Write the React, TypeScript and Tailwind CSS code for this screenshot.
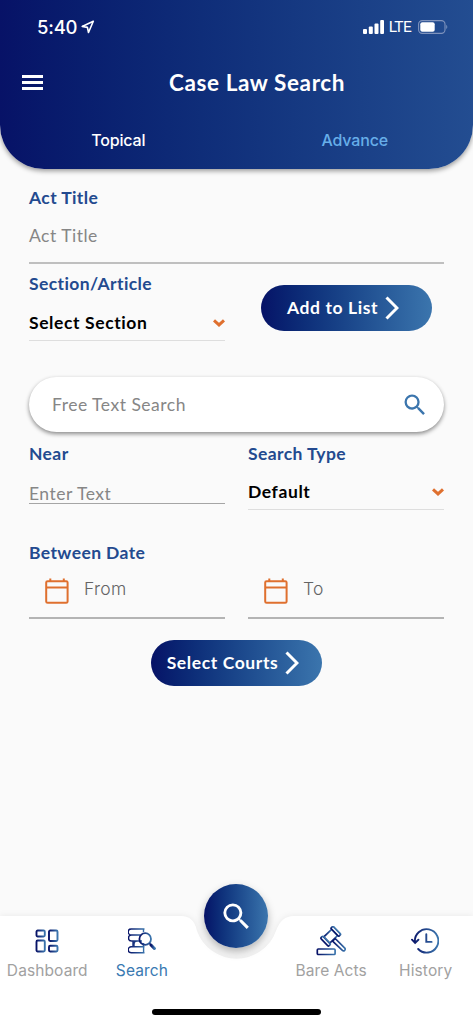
import type { ReactNode } from "react"

const labelClass = "font-[Lato,sans-serif] text-[17.5px] leading-5 font-bold tracking-[0.4px] text-[#234a8f]"
const placeholderClass = "font-[Lato,sans-serif] text-[17.5px] leading-5 tracking-[0.5px] text-[#868686]"

const SearchGlyph = ({ className }: { className: string }) => (
  <svg viewBox="0 0 24 24" fill="currentColor" className={className} aria-hidden>
    <path d="M15.5 14h-.79l-.28-.27A6.471 6.471 0 0 0 16 9.5 6.5 6.5 0 1 0 9.5 16c1.61 0 3.09-.59 4.23-1.57l.27.28v.79l5 4.99L20.49 19l-4.99-5zm-6 0C7.01 14 5 11.99 5 9.5S7.01 5 9.5 5 14 7.01 14 9.5 11.99 14 9.5 14z" />
  </svg>
)

const CalendarIcon = () => (
  <svg viewBox="0 0 24 26" fill="none" stroke="#df702f" strokeWidth="2" className="h-[26px] w-6 shrink-0" aria-hidden>
    <rect x="1.2" y="3.2" width="21.4" height="21.6" rx="1.4" />
    <path d="M1 9.5h22M5.3 .5v3M18.8 .5v3" />
  </svg>
)

const StatusBar = () => (
  <div className="flex h-[53px] items-center pl-[37px] pr-[25px] text-white">
    <span className="font-[Inter,sans-serif] text-[18.5px] leading-5 font-medium tracking-[-0.2px]">5:40</span>
    <svg viewBox="0 0 14 14" fill="none" stroke="currentColor" strokeWidth="1.6" strokeLinejoin="round" className="ml-[4px] size-[14px]" aria-hidden>
      <path d="M12.3 1.3L1.2 6.4l5.2 1 1.1 5.1z" />
    </svg>
    <svg viewBox="0 0 21 14" fill="currentColor" className="ml-auto h-[14px] w-[21px]" aria-hidden>
      <rect x="0" y="9" width="4" height="5" rx="1" />
      <rect x="5.8" y="6.5" width="4" height="7.5" rx="1" />
      <rect x="11.5" y="3.5" width="4" height="10.5" rx="1" />
      <rect x="17.2" y="0" width="3.8" height="14" rx="1" />
    </svg>
    <span className="ml-[5px] font-[Roboto,sans-serif] text-[15.5px] leading-5 font-normal tracking-[-0.7px] whitespace-nowrap">LTE</span>
    <svg viewBox="0 0 30 14" fill="none" className="ml-[7px] h-[14px] w-[30px]" aria-hidden>
      <rect x=".6" y=".6" width="26.4" height="12.8" rx="3.6" stroke="#7f93bd" strokeWidth="1.1" />
      <rect x="2.3" y="2.2" width="14.4" height="9.6" rx="2" fill="white" />
      <path d="M28.4 4.8q1.7 2.2 0 4.4z" fill="#8fa3c8" />
    </svg>
  </div>
)

const Header = () => (
  <header className="h-[169px] shrink-0 rounded-b-[44px] bg-linear-to-r from-[#071267] to-[#234d91] shadow-[0_2px_5px_rgba(0,0,0,0.4)]">
    <StatusBar />
    <div className="grid h-[59px] grid-cols-[32px_1fr_32px] items-center px-[22px]">
      <button aria-label="Menu" className="flex w-[21px] flex-col gap-[3.5px]">
        <span className="h-[2.5px] bg-white" />
        <span className="h-[2.5px] bg-white" />
        <span className="h-[2.5px] bg-white" />
      </button>
      <h1 className="whitespace-nowrap pl-[41px] text-center font-[Lato,sans-serif] text-[22.5px] leading-7 font-bold tracking-[0.6px] text-white">
        Case Law Search
      </h1>
    </div>
    <div className="grid grid-cols-2 pt-[18px] text-center font-[Inter,sans-serif] text-[16px] leading-5 font-medium tracking-[-0.15px]">
      <span className="text-white">Topical</span>
      <span className="text-[#67aee9]">Advance</span>
    </div>
  </header>
)

const SelectField = ({ value }: { value: string }) => (
  <div className="flex h-[36px] items-center justify-between border-b border-[#dedede] pt-px font-[Lato,sans-serif] text-[17.5px] font-bold tracking-[0.6px] text-black">
    {value}
    <svg viewBox="0 0 12 8" fill="none" stroke="#df702f" strokeWidth="3" className="-mt-px h-2 w-3" aria-hidden>
      <path d="M1 1.3l5 4.6 5-4.6" />
    </svg>
  </div>
)

const PillButton = ({ children }: { children: ReactNode }) => (
  <button className="flex h-[46px] w-[171px] items-center justify-center gap-[7px] rounded-full bg-linear-to-r from-[#071267] to-[#3b75ad] pr-[7px] font-[Lato,sans-serif] text-[17.5px] leading-5 font-bold tracking-[0.6px] whitespace-nowrap text-white">
    {children}
    <svg viewBox="0 0 14 24" fill="none" stroke="currentColor" strokeWidth="3" className="h-6 w-[14px]" aria-hidden>
      <path d="M1.5 1.5L12 12 1.5 22.5" />
    </svg>
  </button>
)

const DateField = ({ label }: { label: string }) => (
  <div className="flex h-[55px] items-center border-b-2 border-[#b4b4b4] pl-[15.5px]">
    <CalendarIcon />
    <span className="-mt-[4px] ml-[15.5px] font-[Inter,sans-serif] text-[17.5px] leading-5 font-light tracking-[0.3px] text-[#646464]">{label}</span>
  </div>
)

const DashboardIcon = () => (
  <svg viewBox="0 0 24 24" fill="none" stroke="url(#navInk)" strokeWidth="1.9" className="h-[24px] w-[24px]" aria-hidden>
    <rect x="1.5" y="1.5" width="8.3" height="6" rx="1.2" />
    <rect x="14" y="1.5" width="8.5" height="10.5" rx="1.2" />
    <rect x="1.5" y="11.5" width="8.3" height="11" rx="1.2" />
    <rect x="14" y="16.7" width="8.5" height="5.8" rx="1.2" />
  </svg>
)

const BooksIcon = () => (
  <svg viewBox="0 0 28 26" fill="none" stroke="url(#navInk)" strokeWidth="1.4" className="h-[26px] w-[28px]" aria-hidden>
    <path d="M16.5 1H3.2a3 3 0 0 0 0 6h9M15.5 1v3M12 7H3.5a3 3 0 0 0 0 6H14M5 13v5.8M16.5 18.8H3.2a3 3 0 0 0 0 6h13.3M15.6 18.8v6M6 18.5V16q0-3 3-3M15.5 15v3.8" />
    <circle cx="17.2" cy="11" r="5.8" strokeWidth="1.8" />
    <path d="M21.6 15.4l2 2" strokeWidth="1.5" />
    <path d="M23 17l3.4 3.5" strokeWidth="3" strokeLinecap="round" />
  </svg>
)

const GavelIcon = () => (
  <svg viewBox="0 0 30 30" fill="none" stroke="url(#navInk)" strokeWidth="1.7" strokeLinejoin="round" className="h-[30px] w-[30px]" aria-hidden>
    <rect x="1.3" y="23" width="17.8" height="5.5" rx="1" />
    <g transform="rotate(-44 14.5 10)">
      <rect x="9" y="6" width="11" height="8.6" />
      <rect x="5.8" y="4.6" width="3.2" height="11.4" rx="1" />
      <rect x="20" y="4.6" width="3.2" height="11.4" rx="1" />
    </g>
    <path d="M16.6 15.1l2.6-2.6 9.6 9.6q.9 1.1-.1 2.2-1.2 1.1-2.3.1z" />
  </svg>
)

const HistoryIcon = () => (
  <svg viewBox="0 0 28 26" fill="none" stroke="url(#navInk)" strokeWidth="1.9" strokeLinecap="round" className="mr-[1px] h-[26px] w-[28px]" aria-hidden>
    <path d="M4 14.2A11.7 11.7 0 1 1 7.2 21M1 11.7l3.1 3.2 3.3-3.2M15.3 6.2v7.7h5.3" />
  </svg>
)

const NavItem = ({ icon, label, active }: { icon: ReactNode; label: string; active?: boolean }) => (
  <div className="flex flex-col items-center">
    <div className="flex h-[30px] items-center">{icon}</div>
    <span className={`mt-[5px] font-[Inter,sans-serif] text-[15.5px] leading-5 tracking-[0.1px] whitespace-nowrap ${active ? "text-[#3979b2]" : "text-[#a1a1a1]"}`}>
      {label}
    </span>
  </div>
)

const BottomNav = () => (
  <nav className="relative mt-auto h-[108px] shrink-0">
    <svg viewBox="0 0 473 108" className="absolute inset-0 h-[108px] w-[473px] overflow-visible" aria-hidden>
      <defs>
        <linearGradient id="navInk" x1="0" x2="1" y1="0" y2="0">
          <stop stopColor="#071267" />
          <stop offset="1" stopColor="#3b75ad" />
        </linearGradient>
      </defs>
      <path
        d="M0 0H181Q194 0 197 15A42 42 0 0 0 276 15Q281 0 294 0H473V108H0Z"
        fill="white"
        className="drop-shadow-[0_0_3px_rgba(0,0,0,0.07)]"
      />
    </svg>
    <div className="relative grid grid-cols-5 pt-[10px]">
      <NavItem icon={<DashboardIcon />} label="Dashboard" />
      <NavItem icon={<BooksIcon />} label="Search" active />
      <button
        aria-label="Search"
        className="-mt-[42px] flex size-16 items-center justify-center justify-self-center rounded-full bg-linear-to-r from-[#071267] to-[#3b75ad] text-white shadow-[0_4px_9px_rgba(0,0,0,0.28)]"
      >
        <SearchGlyph className="size-[35px]" />
      </button>
      <NavItem icon={<GavelIcon />} label="Bare Acts" />
      <NavItem icon={<HistoryIcon />} label="History" />
    </div>
    <div className="absolute bottom-[9px] left-[152px] h-[6px] w-[169px] rounded-full bg-black" />
  </nav>
)

export default function App() {
  return (
    <div className="flex h-[1024px] w-[473px] flex-col overflow-hidden bg-[#fafafa]">
      <Header />
      <main className="px-[29px] pt-[19px]">
        <div className={labelClass}>Act Title</div>
        <div className={`mt-[18px] h-[38px] border-b-2 border-[#bfbfbf] ${placeholderClass}`}>Act Title</div>

        <div className="mt-[10px] flex justify-between pr-[12px]">
          <div className="w-[196px]">
            <div className={labelClass}>Section/Article</div>
            <div className="mt-[11px]">
              <SelectField value="Select Section" />
            </div>
          </div>
          <div className="pt-[11px]">
            <PillButton>Add to List</PillButton>
          </div>
        </div>

        <div className="mt-[36px] flex h-[55px] items-center justify-between rounded-full bg-white pr-[15px] pl-[23px] shadow-[0_2px_4px_rgba(0,0,0,0.45)]">
          <span className={placeholderClass}>Free Text Search</span>
          <SearchGlyph className="size-[28px] text-[#3b75ad]" />
        </div>

        <div className="mt-[12px] grid grid-cols-[196px_196px] justify-between">
          <div>
            <div className={labelClass}>Near</div>
            <div className={`mt-[20px] h-[20px] border-b border-[#a5a5a5] ${placeholderClass}`}>Enter Text</div>
          </div>
          <div>
            <div className={labelClass}>Search Type</div>
            <div className="mt-[10px]">
              <SelectField value="Default" />
            </div>
          </div>
        </div>

        <div className={`mt-[33px] ${labelClass}`}>Between Date</div>
        <div className="mt-[1px] grid grid-cols-[196px_196px] justify-between">
          <DateField label="From" />
          <DateField label="To" />
        </div>

        <div className="mt-[21px] flex justify-center">
          <PillButton>Select Courts</PillButton>
        </div>
      </main>
      <BottomNav />
    </div>
  )
}
